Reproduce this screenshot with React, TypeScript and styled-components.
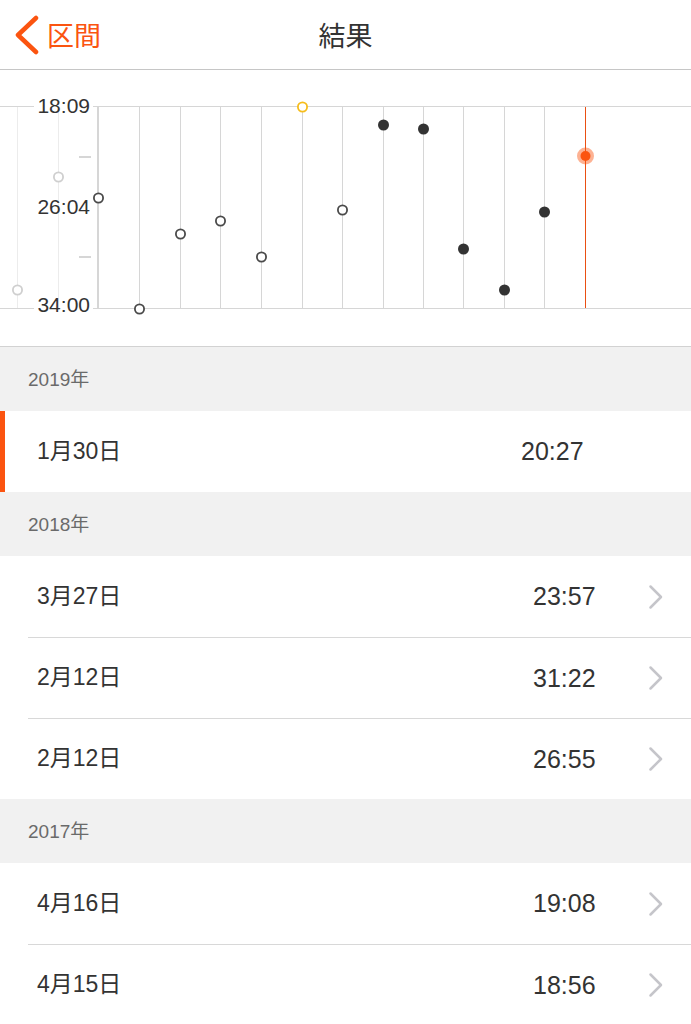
import { Fragment } from 'react'
import styled, { createGlobalStyle } from 'styled-components'

const ORANGE = '#fb5410'
const FONT = `"Liberation Sans", "Noto Sans CJK JP", sans-serif`

const GlobalStyle = createGlobalStyle`
  html, body {
    margin: 0;
    padding: 0;
    background: #ffffff;
  }
  body {
    font-family: ${FONT};
    -webkit-font-smoothing: antialiased;
  }
`

const Page = styled.div`
  width: 691px;
  min-height: 1024px;
  background: #ffffff;
  overflow: hidden;
`

const NavBar = styled.header`
  display: grid;
  grid-template-columns: 1fr auto 1fr;
  align-items: center;
  height: 69px;
  border-bottom: 1px solid #c6c6c6;
`

const BackButton = styled.button`
  display: flex;
  align-items: center;
  gap: 8px;
  justify-self: start;
  padding: 0 0 0 13px;
  border: 0;
  background: none;
  color: ${ORANGE};
  font-family: ${FONT};
  font-size: 27px;
  cursor: pointer;
`

const Title = styled.h1`
  margin: 0;
  font-size: 27px;
  font-weight: 400;
  color: #333333;
`

const ChartWrap = styled.section`
  height: 276px;
  border-bottom: 1px solid #d2d2d2;
`

const SectionHeader = styled.div`
  display: flex;
  align-items: center;
  height: 64px;
  padding-left: 28px;
  background: #f1f1f1;
  color: #6a6a6a;
  font-size: 19px;
  line-height: 1;
`

const Row = styled.div<{ $selected?: boolean }>`
  display: flex;
  height: 81px;
  padding-left: 28px;
  background: #ffffff;
  box-shadow: ${({ $selected }) =>
    $selected ? `inset 5px 0 0 ${ORANGE}` : 'none'};
`

const RowInner = styled.div<{ $divider?: boolean }>`
  display: flex;
  flex: 1;
  align-items: center;
  padding-left: 9px;
  border-top: ${({ $divider }) => ($divider ? '1px solid #d8d8d8' : '0')};
`

const DateText = styled.span`
  flex: 1;
  color: #333333;
  font-size: 23px;
  line-height: 1;
  margin-top: -1px;
`

const TimeText = styled.span`
  width: 100px;
  color: #333333;
  font-size: 25px;
  line-height: 1;
`

const Accessory = styled.span<{ $width: number }>`
  display: flex;
  align-items: center;
  width: ${({ $width }) => $width}px;
  padding-left: 15px;
  box-sizing: border-box;
`

const GRID_X = [17, 58, 98, 139, 180, 220, 261, 302, 342, 383, 423, 463, 504, 544, 585]
const TOP = 36.5
const BOTTOM = 238.5

type Kind = 'faded' | 'hollow' | 'yellow' | 'filled' | 'current'

const POINTS: { x: number; y: number; kind: Kind }[] = [
  { x: 17, y: 220, kind: 'faded' },
  { x: 58, y: 107, kind: 'faded' },
  { x: 98, y: 128, kind: 'hollow' },
  { x: 139, y: 239, kind: 'hollow' },
  { x: 180, y: 164, kind: 'hollow' },
  { x: 220, y: 151, kind: 'hollow' },
  { x: 261, y: 187, kind: 'hollow' },
  { x: 302, y: 37, kind: 'yellow' },
  { x: 342, y: 140, kind: 'hollow' },
  { x: 383, y: 55, kind: 'filled' },
  { x: 423, y: 59, kind: 'filled' },
  { x: 463, y: 179, kind: 'filled' },
  { x: 504, y: 220, kind: 'filled' },
  { x: 544, y: 142, kind: 'filled' },
  { x: 585, y: 86, kind: 'current' },
]

function Point({ x, y, kind }: { x: number; y: number; kind: Kind }) {
  const cx = x + 0.5
  if (kind === 'filled') return <circle cx={cx} cy={y} r={5.5} fill="#333" />
  if (kind === 'current')
    return (
      <g>
        <circle cx={cx} cy={y} r={8.5} fill={ORANGE} opacity={0.45} />
        <circle cx={cx} cy={y} r={5} fill={ORANGE} />
      </g>
    )
  const stroke = kind === 'faded' ? '#cfcfcf' : kind === 'yellow' ? '#f6bd1c' : '#4a4a4a'
  return <circle cx={cx} cy={y} r={4.6} fill="#fff" stroke={stroke} strokeWidth={1.8} />
}

function Chart() {
  return (
    <svg width="691" height="276" viewBox="0 0 691 276">
      {GRID_X.map((x, i) => (
        <line
          key={x}
          x1={i === 2 ? x : x + 0.5}
          x2={i === 2 ? x : x + 0.5}
          y1={TOP}
          y2={BOTTOM}
          stroke={i < 2 ? '#ececec' : i === GRID_X.length - 1 ? '#ea4f12' : '#d6d6d6'}
          strokeWidth={i === 2 ? 2 : 1}
        />
      ))}
      {[TOP, BOTTOM].map((y) => (
        <Fragment key={y}>
          <line x1={0} x2={34} y1={y} y2={y} stroke="#d6d6d6" />
          <line x1={93} x2={691} y1={y} y2={y} stroke="#d6d6d6" />
        </Fragment>
      ))}
      <line x1={79} x2={91} y1={87} y2={87} stroke="#c8c8c8" strokeWidth={1.5} />
      <line x1={79} x2={91} y1={187} y2={187} stroke="#c8c8c8" strokeWidth={1.5} />
      <g fontFamily={FONT} fontSize="21" fill="#333" textAnchor="end">
        <text x={90} y={43}>18:09</text>
        <text x={90} y={144}>26:04</text>
        <text x={90} y={242}>34:00</text>
      </g>
      {POINTS.map((p) => (
        <Point key={p.x} {...p} />
      ))}
    </svg>
  )
}

function BackChevron() {
  return (
    <svg width="26" height="42" viewBox="0 0 26 42">
      <path
        d="M23 4 L5 21 L23 38"
        fill="none"
        stroke={ORANGE}
        strokeWidth="4.5"
        strokeLinecap="round"
        strokeLinejoin="round"
      />
    </svg>
  )
}

function Chevron() {
  return (
    <svg width="16" height="26" viewBox="0 0 16 26">
      <path
        d="M2.5 2.5 L13 13 L2.5 23.5"
        fill="none"
        stroke="#c5c5ca"
        strokeWidth="2.5"
        strokeLinecap="round"
        strokeLinejoin="round"
      />
    </svg>
  )
}

type Result = { date: string; time: string; selected?: boolean }

const SECTIONS: { year: string; results: Result[] }[] = [
  { year: '2019年', results: [{ date: '1月30日', time: '20:27', selected: true }] },
  {
    year: '2018年',
    results: [
      { date: '3月27日', time: '23:57' },
      { date: '2月12日', time: '31:22' },
      { date: '2月12日', time: '26:55' },
    ],
  },
  {
    year: '2017年',
    results: [
      { date: '4月16日', time: '19:08' },
      { date: '4月15日', time: '18:56' },
    ],
  },
]

export default function App() {
  return (
    <Page>
      <GlobalStyle />
      <NavBar>
        <BackButton>
          <BackChevron />
          区間
        </BackButton>
        <Title>結果</Title>
      </NavBar>

      <ChartWrap>
        <Chart />
      </ChartWrap>

      {SECTIONS.map((section) => (
        <Fragment key={section.year}>
          <SectionHeader>{section.year}</SectionHeader>
          {section.results.map((r, i) => (
            <Row key={`${r.date}-${r.time}`} $selected={r.selected}>
              <RowInner $divider={i > 0}>
                <DateText>{r.date}</DateText>
                <TimeText>{r.time}</TimeText>
                <Accessory $width={r.selected ? 70 : 58}>
                  {!r.selected && <Chevron />}
                </Accessory>
              </RowInner>
            </Row>
          ))}
        </Fragment>
      ))}
    </Page>
  )
}
